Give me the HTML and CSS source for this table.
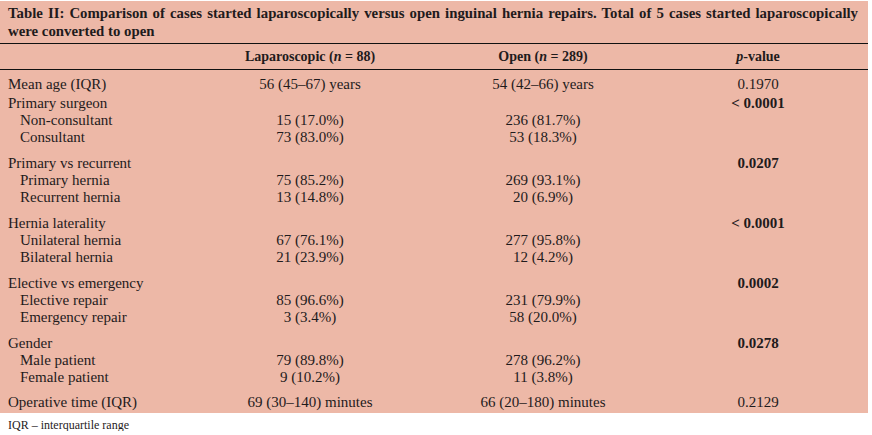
FILE: index.html
```html
<!DOCTYPE html>
<html lang="en">
<head>
<meta charset="utf-8">
<title>Table II</title>
<link rel="stylesheet" href="styles.css">
</head>
<body>
<div class="tbl">
  <div class="caption">Table II: Comparison of cases started laparoscopically versus open inguinal hernia repairs. Total of 5 cases started laparoscopically were converted to open</div>
  <div class="row head">
    <div class="c"></div>
    <div class="c">Laparoscopic (<i>n</i> = 88)</div>
    <div class="c">Open (<i>n</i> = 289)</div>
    <div class="c"><i>p</i>-value</div>
  </div>
  <div class="row first">
    <div class="c">Mean age (IQR)</div>
    <div class="c">56 (45–67) years</div>
    <div class="c">54 (42–66) years</div>
    <div class="c">0.1970</div>
  </div>
  <div class="group">
    <div class="row"><div class="c">Primary surgeon</div><div class="c"></div><div class="c"></div><div class="c b">&lt; 0.0001</div></div>
    <div class="row sub"><div class="c">Non-consultant</div><div class="c">15 (17.0%)</div><div class="c">236 (81.7%)</div><div class="c"></div></div>
    <div class="row sub"><div class="c">Consultant</div><div class="c">73 (83.0%)</div><div class="c">53 (18.3%)</div><div class="c"></div></div>
  </div>
  <div class="group">
    <div class="row"><div class="c">Primary vs recurrent</div><div class="c"></div><div class="c"></div><div class="c b">0.0207</div></div>
    <div class="row sub"><div class="c">Primary hernia</div><div class="c">75 (85.2%)</div><div class="c">269 (93.1%)</div><div class="c"></div></div>
    <div class="row sub"><div class="c">Recurrent hernia</div><div class="c">13 (14.8%)</div><div class="c">20 (6.9%)</div><div class="c"></div></div>
  </div>
  <div class="group">
    <div class="row"><div class="c">Hernia laterality</div><div class="c"></div><div class="c"></div><div class="c b">&lt; 0.0001</div></div>
    <div class="row sub"><div class="c">Unilateral hernia</div><div class="c">67 (76.1%)</div><div class="c">277 (95.8%)</div><div class="c"></div></div>
    <div class="row sub"><div class="c">Bilateral hernia</div><div class="c">21 (23.9%)</div><div class="c">12 (4.2%)</div><div class="c"></div></div>
  </div>
  <div class="group">
    <div class="row"><div class="c">Elective vs emergency</div><div class="c"></div><div class="c"></div><div class="c b">0.0002</div></div>
    <div class="row sub"><div class="c">Elective repair</div><div class="c">85 (96.6%)</div><div class="c">231 (79.9%)</div><div class="c"></div></div>
    <div class="row sub"><div class="c">Emergency repair</div><div class="c">3 (3.4%)</div><div class="c">58 (20.0%)</div><div class="c"></div></div>
  </div>
  <div class="group">
    <div class="row"><div class="c">Gender</div><div class="c"></div><div class="c"></div><div class="c b">0.0278</div></div>
    <div class="row sub"><div class="c">Male patient</div><div class="c">79 (89.8%)</div><div class="c">278 (96.2%)</div><div class="c"></div></div>
    <div class="row sub"><div class="c">Female patient</div><div class="c">9 (10.2%)</div><div class="c">11 (3.8%)</div><div class="c"></div></div>
  </div>
  <div class="row last">
    <div class="c">Operative time (IQR)</div>
    <div class="c">69 (30–140) minutes</div>
    <div class="c">66 (20–180) minutes</div>
    <div class="c">0.2129</div>
  </div>
</div>
<p class="note">IQR – interquartile range</p>
</body>
</html>
```
FILE: styles.css
```css
body {
  margin: 0;
  padding-top: 1px;
  background: #ffffff;
  color: #1f1b1c;
  font-family: "Liberation Serif", "Times New Roman", serif;
}
.tbl {
  width: 868px;
  background: #edb8a7;
}
.caption {
  font-weight: bold;
  font-size: 14.8px;
  line-height: 18px;
  padding: 3px 10px 3px 8px;
  text-align: justify;
}
.row {
  display: grid;
  grid-template-columns: 182px 256px 210px 220px;
  font-size: 15px;
  line-height: 16.75px;
}
.row .c {
  text-align: center;
  white-space: nowrap;
}
.row .c:first-child {
  text-align: left;
  padding-left: 8px;
}
.row.sub .c:first-child {
  padding-left: 20px;
}
.head {
  border-top: 1px solid #111;
  border-bottom: 1px solid #111;
  font-weight: bold;
  font-size: 14px;
  line-height: 25px;
}
.first {
  padding-top: 5.6px;
}
.group {
  padding: 3px 0 6.75px;
}
.last {
  padding: 2px 0 1.6px;
}
.b {
  font-weight: bold;
}
.note {
  margin: 0;
  padding: 6px 8px 0;
  font-size: 12px;
  line-height: 12px;
}
```
